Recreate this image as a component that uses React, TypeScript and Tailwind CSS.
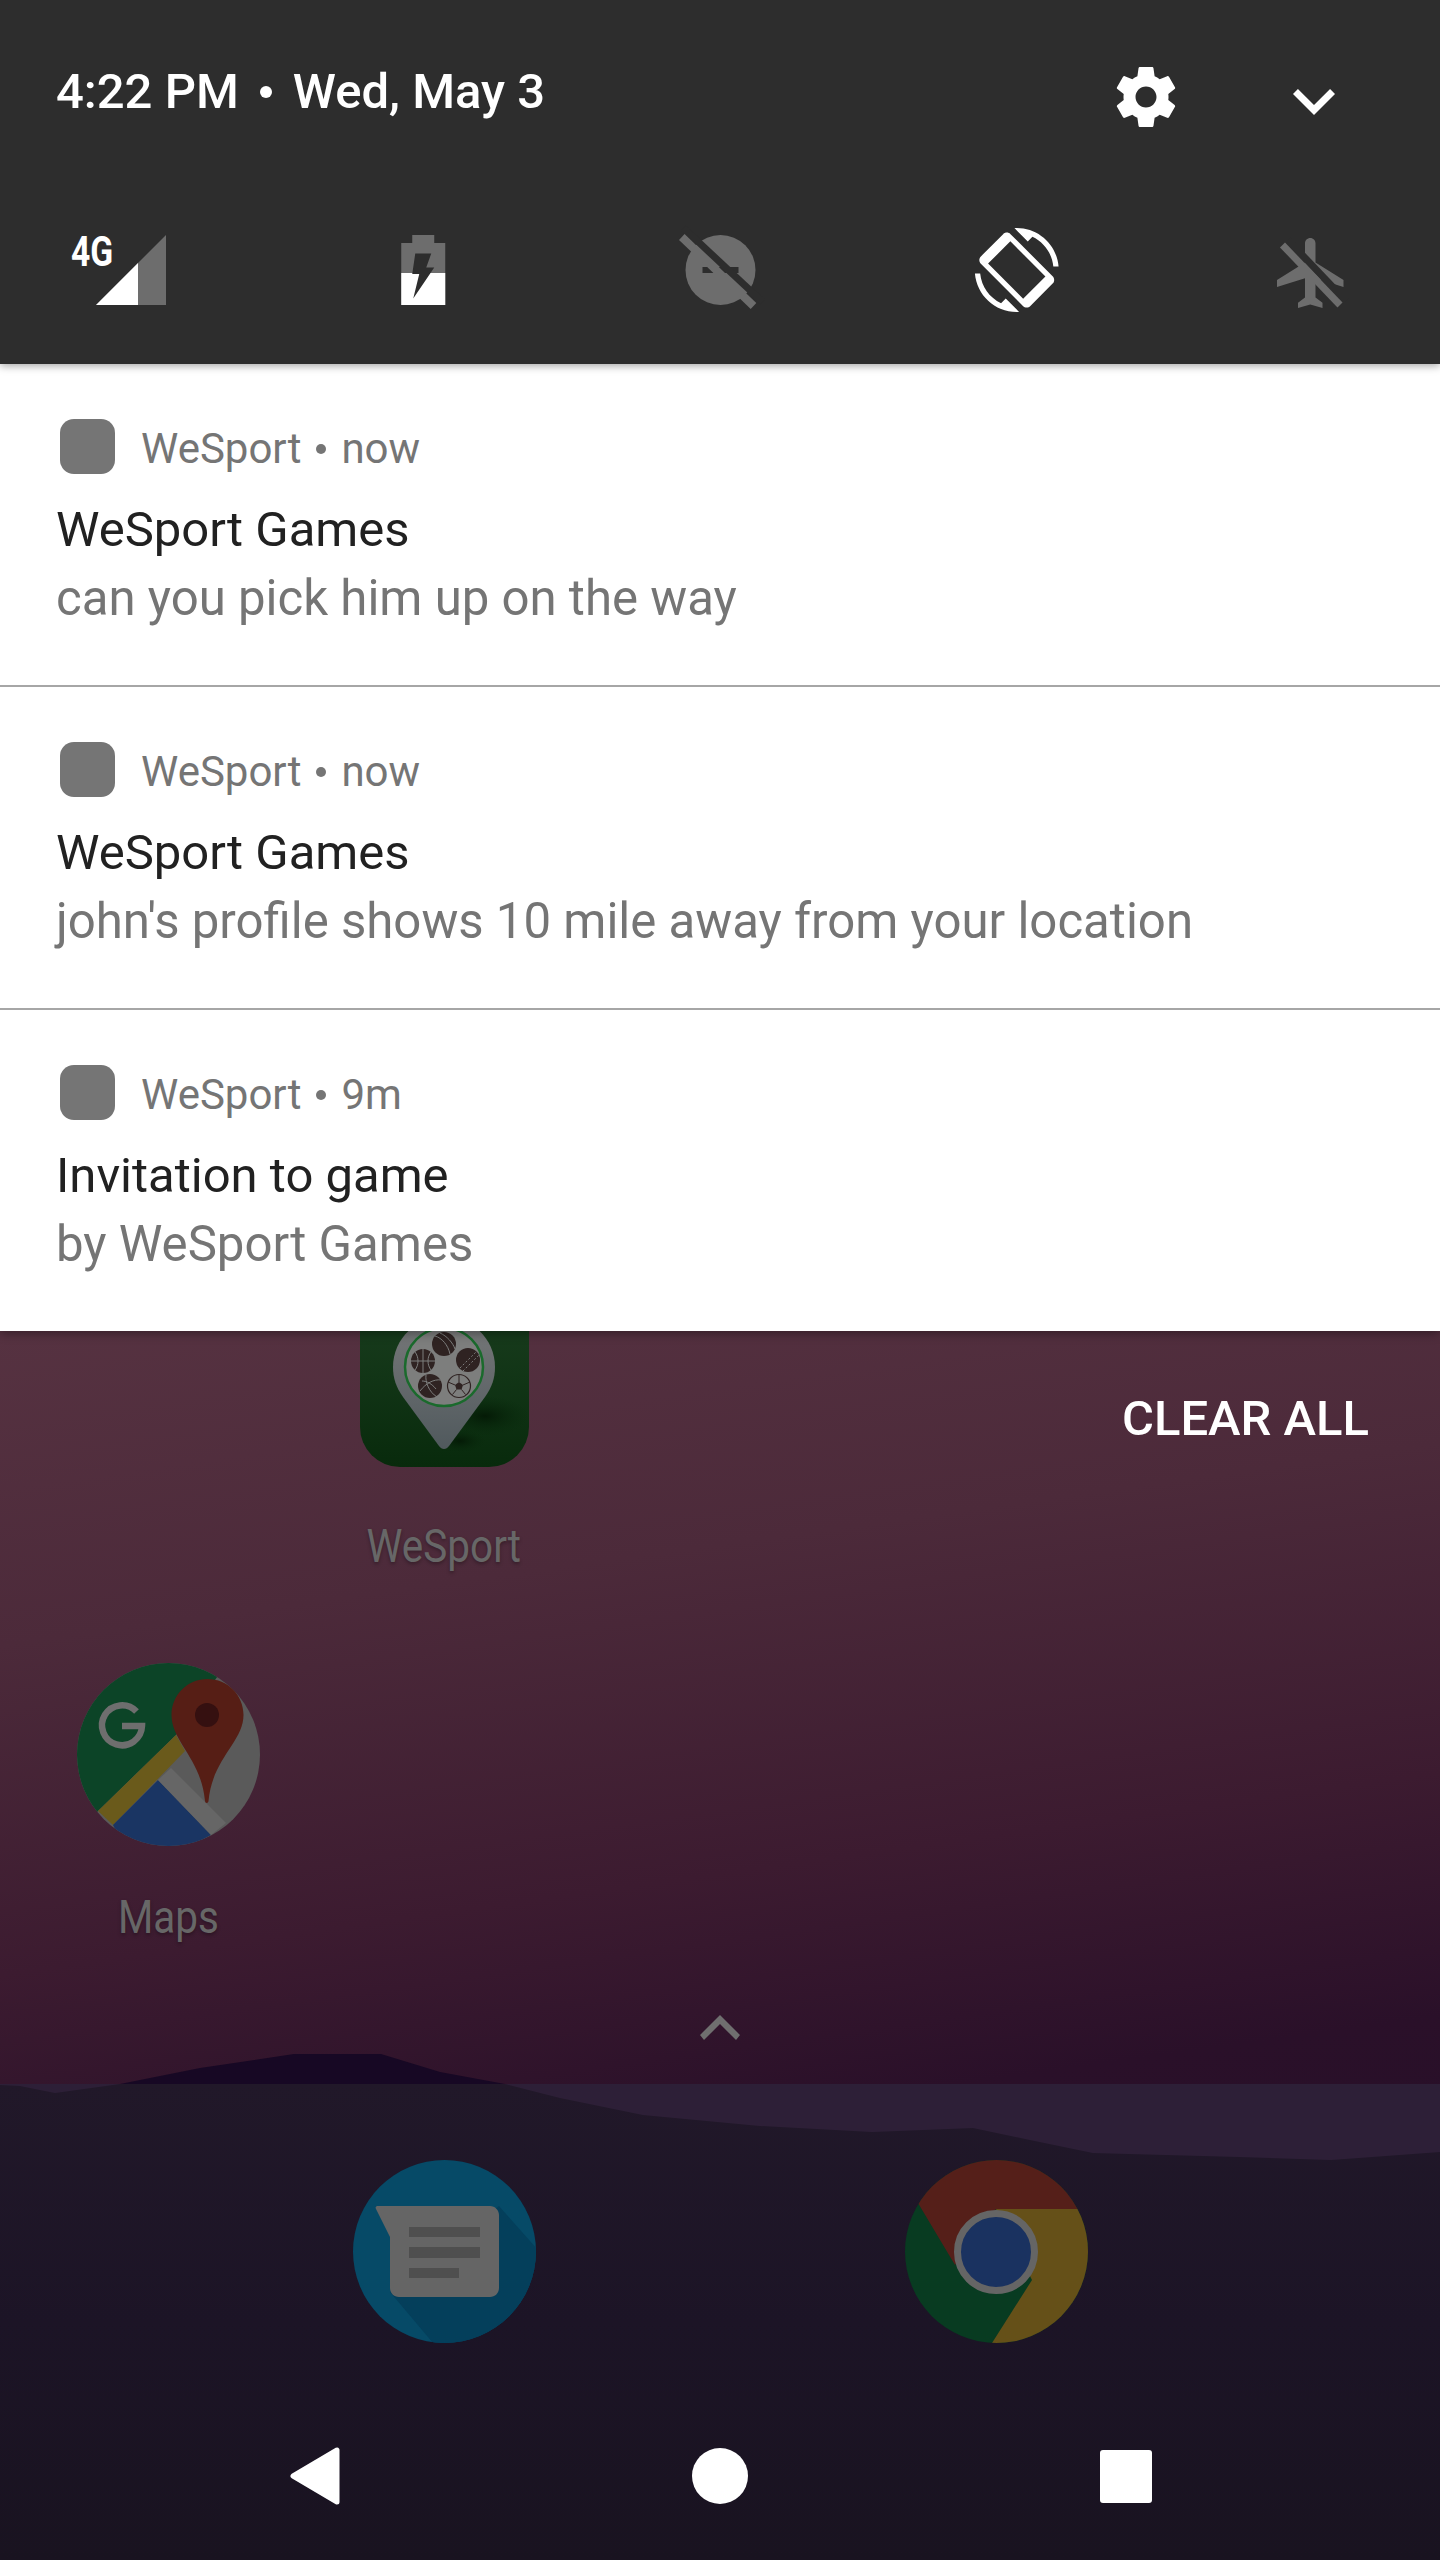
const font = { fontFamily: 'Roboto, "Liberation Sans", sans-serif' };

function Notification({ time, title, body, divider }: { time: string; title: string; body: string; divider?: boolean }) {
  return (
    <div className={divider ? 'bg-white pl-[56px] pt-[55px] pb-[53px] border-b-2 border-[#a6a6a6]' : 'bg-white pl-[56px] pt-[55px] pb-[53px]'}>
      <div className="flex items-center h-[55px] pl-[4px]">
        <div className="w-[55px] h-[55px] rounded-[14px] bg-[#757575]" />
        <div className="ml-[26px] mt-[4px] text-[42px] leading-[58px] text-[#757575] flex items-center">
          <span>WeSport</span>
          <span className="mx-[15px] w-[10px] h-[10px] rounded-full bg-[#757575] inline-block" />
          <span>{time}</span>
        </div>
      </div>
      <div className="mt-[22px] text-[49px] leading-[68px] text-[#212121]">{title}</div>
      <div className="text-[49.15px] leading-[68px] text-[#757575]">{body}</div>
    </div>
  );
}

function Pin() {
  return (
    <svg viewBox="0 0 169 136" className="w-[169px] h-[136px] block">
      <defs>
        <linearGradient id="wsg" x1="0" y1="0" x2="0" y2="1">
          <stop offset="0" stopColor="#1b3f20" />
          <stop offset="1" stopColor="#082a0c" />
        </linearGradient>
        <linearGradient id="wsp" x1="0" y1="0" x2="0" y2="1">
          <stop offset="0" stopColor="#78797a" />
          <stop offset="1" stopColor="#50595d" />
        </linearGradient>
        <radialGradient id="wss" cx="0.5" cy="0.5" r="0.5">
          <stop offset="0" stopColor="#041a06" />
          <stop offset="1" stopColor="#082a0c" stopOpacity="0" />
        </radialGradient>
      </defs>
      <path d="M0-40H169V96a40 40 0 0 1-40 40H40A40 40 0 0 1 0 96Z" fill="url(#wsg)" />
      <ellipse cx="125" cy="85" rx="44" ry="20" fill="url(#wss)" />
      <ellipse cx="100" cy="110" rx="26" ry="12" fill="url(#wss)" />
      <path d="M84 118c-2 0-3.500-1-5-3L43 66C36 56 33 47 33 36 33 8 56-14 84-14s51 22 51 50c0 11-3 20-10 30L89 115c-1.500 2-3 3-5 3Z" fill="url(#wsp)" />
      <circle cx="84" cy="36" r="39" fill="#7d7e7d" stroke="#1a6a2c" strokeWidth="2.500" />
      <g fill="#2f2322">
        <circle cx="63" cy="30" r="12" />
        <circle cx="84" cy="13" r="12" />
        <circle cx="108" cy="29" r="12" />
        <circle cx="70" cy="55" r="12" />
      </g>
      <g stroke="#7d7e7d" strokeWidth="1" fill="none">
        <path d="M51 30h24M63 18v24M55 21c4 5 4 13 0 18M71 21c-4 5-4 13 0 18" />
        <path d="M75 5c7 2 13 9 15 18M80 2c7 3 13 10 15 16" />
        <path d="M100 37l16-16M103 40l16-16" strokeDasharray="2 2" />
        <path d="M60 60c6-8 14-12 21-11M66 44c-1 7 3 17 11 22M62 50c5 0 10 3 14 8" />
      </g>
      <circle cx="99" cy="55" r="11.500" fill="#7d7e7d" stroke="#2f2322" strokeWidth="1.200" />
      <path d="M99 51l4 3-1.500 4.500h-5L95 54Z" fill="#2f2322" />
      <path d="M99 44v7M103 54l7-3M101.500 58.500l4 5M96.500 58.500l-4 5M95 54l-7-3" stroke="#2f2322" strokeWidth="1" />
    </svg>
  );
}

function Maps() {
  return (
    <svg viewBox="0 0 183 183" className="w-[183px] h-[183px] block">
      <defs>
        <clipPath id="mc"><circle cx="91.500" cy="91.500" r="91.500" /></clipPath>
      </defs>
      <g clipPath="url(#mc)">
        <rect width="183" height="183" fill="#5a5a5a" />
        <path d="M0 0H150L99 72 21 148 0 170Z" fill="#0c4427" />
        <path d="M21 148 99 72 108 88 36 162Z" fill="#6a5a1b" />
        <path d="M36 162 81 117 134 172 100 190H50Z" fill="#1a3563" />
        <path d="M81 117 94 105 149 160 134 172Z" fill="#666666" />
      </g>
      <path d="M130.500 16c20 0 36 16 36 36 0 27-31 43-35 86-.2 2.600-3.300 2.600-3.500 0-4-43-33.500-59-33.500-86 0-20 16-36 36-36Z" fill="#561e15" />
      <circle cx="130" cy="52" r="12" fill="#351010" />
      <path d="M59.500 48.500A20 20 0 1 0 65 63H45" fill="none" stroke="#6e6e6e" strokeWidth="6.500" />
    </svg>
  );
}

function Messages() {
  return (
    <svg viewBox="0 0 183 183" className="w-[183px] h-[183px] block">
      <defs>
        <clipPath id="msc"><circle cx="91.500" cy="91.500" r="91.500" /></clipPath>
      </defs>
      <circle cx="91.500" cy="91.500" r="91.500" fill="#064a67" />
      <g clipPath="url(#msc)">
        <path d="M37 132l109-86 40 45v92H80Z" fill="#043f5b" />
      </g>
      <path d="M25 46h112c5 0 9 4 9 9v73c0 5-4 9-9 9H46c-5 0-9-4-9-9V77L23 49c-1-2 0-3 2-3Z" fill="#656565" />
      <path d="M56 67h71v10H56ZM56 87h71v11H56ZM56 108h50v10H56Z" fill="#4f4f4f" />
    </svg>
  );
}

function Chrome() {
  return (
    <svg viewBox="0 0 183 183" className="w-[183px] h-[183px] block">
      <defs>
        <clipPath id="cc"><circle cx="91.500" cy="91.500" r="91.500" /></clipPath>
      </defs>
      <g clipPath="url(#cc)">
        <rect width="183" height="183" fill="#083b21" />
        <path d="M13 43 50 105 91 49H183V0H0V43Z" fill="#551f19" />
        <path d="M91 49H183V183H87L127 120Z" fill="#655018" />
      </g>
      <circle cx="91" cy="92" r="38.500" fill="#1a3260" stroke="#656565" strokeWidth="7" />
    </svg>
  );
}

function Label({ children }: { children: string }) {
  return (
    <div className="text-[46px] leading-[60px] text-[#676767] text-center scale-x-[0.88] [text-shadow:0_2px_4px_rgba(0,0,0,0.3)]">
      {children}
    </div>
  );
}

export default function App() {
  return (
    <div className="w-[1440px] h-[2560px] flex flex-col overflow-hidden relative bg-[#1a1421]" style={font}>
      <header className="relative z-20 h-[364px] bg-[#2d2d2d] shadow-[0_2px_8px_rgba(0,0,0,0.35)]">
        <div className="flex items-start h-[190px] pl-[56px]">
          <div className="flex items-center text-[49px] font-medium text-white leading-[60px] mt-[62px]">
            <span>4:22 PM</span>
            <span className="mx-[21px] w-[12px] h-[12px] rounded-full bg-white inline-block" />
            <span>Wed, May 3</span>
          </div>
          <svg viewBox="0 0 24 24" className="ml-auto mt-[61px] w-[72px] h-[72px]" fill="#fff">
            <path d="M19.43 12.98c.04-.32.07-.64.07-.98s-.03-.66-.07-.98l2.11-1.65c.19-.15.24-.42.12-.64l-2-3.46c-.12-.22-.39-.3-.61-.22l-2.49 1c-.52-.4-1.08-.73-1.69-.98l-.38-2.65C14.46 2.18 14.25 2 14 2h-4c-.25 0-.46.18-.49.42l-.38 2.65c-.61.25-1.17.59-1.69.98l-2.49-1c-.23-.09-.49 0-.61.22l-2 3.46c-.13.22-.07.49.12.64l2.11 1.65c-.04.32-.07.65-.07.98s.03.66.07.98l-2.11 1.65c-.19.15-.24.42-.12.64l2 3.46c.12.22.39.3.61.22l2.49-1c.52.4 1.08.73 1.69.98l.38 2.65c.03.24.24.42.49.42h4c.25 0 .46-.18.49-.42l.38-2.65c.61-.25 1.17-.59 1.69-.98l2.49 1c.23.09.49 0 .61-.22l2-3.46c.12-.22.07-.49-.12-.64l-2.11-1.65zM12 15.500c-1.93 0-3.5-1.57-3.5-3.5s1.57-3.5 3.5-3.5 3.5 1.57 3.5 3.5-1.57 3.5-3.5 3.500z" />
          </svg>
          <svg viewBox="0 0 24 24" className="ml-[90px] mr-[84px] mt-[59px] w-[84px] h-[84px]" fill="#fff">
            <path d="M16.59 8.59 12 13.17 7.41 8.59 6 10l6 6 6-6z" />
          </svg>
        </div>
        <div className="flex justify-between pl-[83px] pr-[86px] h-[84px] mt-[38px]">
          <div className="relative w-[84px] h-[84px]">
            <svg viewBox="83 228 84 84" className="w-[84px] h-[84px] overflow-visible">
              <path d="M96 305 166 235V305Z" fill="#6d6d6d" />
              <path d="M96 305 138 263V305Z" fill="#fff" />
            </svg>
            <span className="absolute left-[-12px] top-[-1px] text-[42px] leading-[50px] font-bold text-white origin-left scale-x-[0.8]">4G</span>
          </div>
          <svg viewBox="379.75 228 84 84" className="w-[84px] h-[84px] overflow-visible">
            <path d="M401 243h11v-8h22v8h11v62h-44Z" fill="#6d6d6d" />
            <path d="M401 273h44v32h-44Z" fill="#fff" />
            <path d="M415 253.500h16l-5 14h8l-21 31 6-24.500h-7Z" fill="#2d2d2d" />
          </svg>
          <svg viewBox="676.5 228 84 84" className="w-[84px] h-[84px] overflow-visible">
            <circle cx="720" cy="270" r="35" fill="#6d6d6d" />
            <path d="M702 267h36v6h-36Z" fill="#2d2d2d" />
            <path d="M683 228 762 302" stroke="#2d2d2d" strokeWidth="7" />
            <path d="M681.300 237 753 306" stroke="#6d6d6d" strokeWidth="8" />
          </svg>
          <svg viewBox="973.25 228 84 84" className="w-[84px] h-[84px] overflow-visible" fill="#fff">
            <g transform="translate(975 228) scale(3.5)">
              <path d="M16.48 2.52c3.27 1.55 5.61 4.72 5.97 8.48h1.5C23.44 4.84 18.29 0 12 0l-.66.03 3.81 3.81 1.33-1.32zm-6.25-.77c-.59-.59-1.54-.59-2.12 0L1.75 8.11c-.59.59-.59 1.54 0 2.12l12.02 12.02c.59.59 1.54.59 2.12 0l6.36-6.36c.59-.59.59-1.54 0-2.12L10.23 1.75zM13.83 20.19 3.81 10.17l6.36-6.36 10.02 10.02-6.36 6.36zM7.52 21.48C4.25 19.94 1.91 16.76 1.55 13H.05C.56 19.16 5.71 24 12 24l.66-.03-3.81-3.81-1.33 1.32z" />
            </g>
          </svg>
          <svg viewBox="1270 228 84 84" className="w-[84px] h-[84px] overflow-visible">
            <g transform="translate(1270 231) scale(3.5)">
              <path d="M21 16v-2l-8-5V3.500c0-.83-.67-1.500-1.500-1.500S10 2.670 10 3.500V9l-8 5v2l8-2.500V19l-2 1.500V22l3.500-1 3.500 1v-1.500L13 19v-5.500l8 2.500z" fill="#6d6d6d" />
            </g>
            <path d="M1288 240 1346 301" stroke="#2d2d2d" strokeWidth="7" />
            <path d="M1282.500 245 1340 305" stroke="#6d6d6d" strokeWidth="7" />
          </svg>
        </div>
      </header>
      <main className="relative z-10 shadow-[0_2px_10px_rgba(0,0,0,0.4)]">
        <Notification time="now" title="WeSport Games" body="can you pick him up on the way" divider />
        <Notification time="now" title="WeSport Games" body="john's profile shows 10 mile away from your location" divider />
        <Notification time="9m" title="Invitation to game" body="by WeSport Games" />
      </main>
      <section className="flex-1 relative flex flex-col bg-[linear-gradient(172deg,#563241_0%,#4c2a3a_22%,#3c1b30_45%,#2a1029_62%,#200d28_100%)]">
        <div className="absolute right-[71px] top-[58px] text-[49px] font-medium leading-[60px] text-white">CLEAR ALL</div>
        <div className="grid grid-cols-5 px-[30px]">
          <div className="col-start-2 flex flex-col items-center">
            <Pin />
            <div className="mt-[49px]"><Label>WeSport</Label></div>
          </div>
        </div>
        <div className="grid grid-cols-5 px-[30px] mt-[87px]">
          <div className="flex flex-col items-center">
            <Maps />
            <div className="mt-[41px]"><Label>Maps</Label></div>
          </div>
        </div>
        <div className="flex justify-center mt-[68px]">
          <svg viewBox="0 0 40 25" className="w-[40px] h-[25px]" fill="#6f6f6f">
            <path d="M20 0 40 20l-4 5L20 9 4 25l-4-5Z" />
          </svg>
        </div>
        <div className="relative mt-[44px] flex-1 flex flex-col">
          <svg viewBox="0 2053 1440 507" className="absolute left-0 top-[-31px] w-[1440px] h-[507px]">
            <defs>
              <linearGradient id="dk" x1="0" y1="0" x2="0" y2="1">
                <stop offset="0" stopColor="#211829" />
                <stop offset="0.5" stopColor="#1c1426" />
                <stop offset="1" stopColor="#191320" />
              </linearGradient>
            </defs>
            <path d="M120 2084 200 2068 294 2054H381L440 2072 505 2084Z" fill="#170824" />
            <path d="M0 2084H1440V2560H0Z" fill="#2d1f37" />
            <path d="M0 2085 20 2086 55 2093 120 2084H505L560 2098 643 2115 760 2126 872 2132 973 2128 1030 2140 1093 2153 1240 2157 1331 2160 1440 2152V2560H0Z" fill="url(#dk)" />
          </svg>
          <div className="relative grid grid-cols-5 px-[30px] pt-[76px]">
            <div className="col-start-2 flex justify-center"><Messages /></div>
            <div className="col-start-4 flex justify-center"><Chrome /></div>
          </div>
          <div className="relative flex justify-between items-center pl-[288px] pr-[288px] mt-[104px] h-[58px]">
            <svg viewBox="0 0 52 58" className="w-[52px] h-[58px]" fill="#fff" stroke="#fff" strokeWidth="5" strokeLinejoin="round">
              <path d="M5 29 49 3V55Z" />
            </svg>
            <div className="w-[56px] h-[56px] rounded-full bg-white" />
            <div className="w-[52px] h-[53px] rounded-[3px] bg-white" />
          </div>
        </div>
      </section>
    </div>
  );
}
